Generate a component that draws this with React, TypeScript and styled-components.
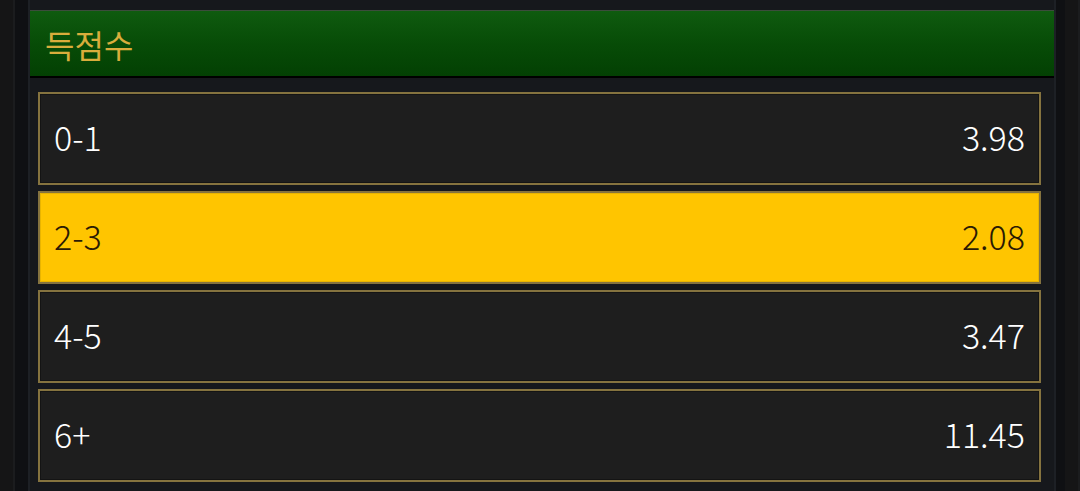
import styled, { createGlobalStyle } from 'styled-components';

const GlobalStyle = createGlobalStyle`
  html, body {
    margin: 0;
    padding: 0;
    background: #141415;
    height: 100%;
  }
  #root {
    height: 100%;
  }
`;

const Page = styled.div`
  display: flex;
  height: 491px;
  overflow: hidden;
  background: #141415;
  font-family: 'Noto Sans CJK KR', 'Noto Sans', sans-serif;
`;

const Rail = styled.div<{ side: 'left' | 'right' }>`
  width: ${(p) => (p.side === 'left' ? '28px' : '24px')};
  display: flex;
  flex-direction: ${(p) => (p.side === 'left' ? 'row' : 'row-reverse')};
  flex-shrink: 0;
`;

const RailOuter = styled.div`
  width: 13px;
  background: #151516;
  border-right: 2px solid #1b1c1e;
`;

const RailInner = styled.div`
  flex: 1;
  background: #0f1013;
`;

const Panel = styled.div`
  flex: 1;
  background: #16181c;
  border-left: 2px solid #1d2025;
  border-right: 2px solid #1d2025;
  padding-top: 10px;
  display: flex;
  flex-direction: column;
`;

const Header = styled.div`
  height: 65px;
  border-top: 1px solid #3c4c3c;
  border-bottom: 2px solid #000;
  background: linear-gradient(to bottom, #0f5b0f 0%, #074c07 50%, #034003 100%);
  display: flex;
  align-items: center;
  padding-left: 15px;
  color: #d9ad3c;
  font-family: 'Noto Sans CJK KR', sans-serif;
  font-size: 32px;
`;

const List = styled.div`
  display: flex;
  flex-direction: column;
  gap: 6px;
  padding: 14px 13px 0 8px;
`;

const Row = styled.div<{ active?: boolean }>`
  height: 93px;
  box-sizing: border-box;
  border: 2px solid #85733f;
  box-shadow: inset 0 0 0 1px ${(p) => (p.active ? '#e8b400' : '#141414')};
  background: ${(p) => (p.active ? '#ffc500' : '#1e1e1e')};
  color: ${(p) => (p.active ? '#2a1a04' : '#ffffff')};
  display: flex;
  align-items: center;
  justify-content: space-between;
  padding: 0 14px 4px;
  font-size: 34px;
  font-weight: 300;
`;

const rows = [
  { label: '0-1', odds: '3.98' },
  { label: '2-3', odds: '2.08', active: true },
  { label: '4-5', odds: '3.47' },
  { label: '6+', odds: '11.45' },
];

export default function App() {
  return (
    <Page>
      <GlobalStyle />
      <Rail side="left">
        <RailOuter />
        <RailInner />
      </Rail>
      <Panel>
        <Header>득점수</Header>
        <List>
          {rows.map((r) => (
            <Row key={r.label} active={r.active}>
              <span>{r.label}</span>
              <span>{r.odds}</span>
            </Row>
          ))}
        </List>
      </Panel>
      <Rail side="right">
        <RailOuter />
        <RailInner />
      </Rail>
    </Page>
  );
}
